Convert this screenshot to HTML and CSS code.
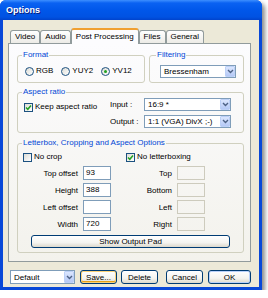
FILE: index.html
```html
<!DOCTYPE html>
<html lang="en">
<head>
  <meta charset="UTF-8" />
  <title>Options</title>
  <link rel="stylesheet" href="styles.css">
</head>
<body>
  <div class="window">
    <div class="titlebar">Options</div>
    <div class="client">
      <div class="tabs">
        <div class="tab">Video</div>
        <div class="tab">Audio</div>
        <div class="tab active">Post Processing</div>
        <div class="tab">Files</div>
        <div class="tab">General</div>
      </div>
      <div class="panel">
        <div class="row-top">
          <fieldset class="group group-format">
            <legend>Format</legend>
            <label class="radio"><span class="dot"></span>RGB</label>
            <label class="radio"><span class="dot"></span>YUY2</label>
            <label class="radio"><span class="dot on"></span>YV12</label>
          </fieldset>
          <fieldset class="group group-filter">
            <legend>Filtering</legend>
            <div class="combo combo-filter">
              <span class="combo-text">Bressenham</span>
              <span class="arrow"><svg width="7" height="5" viewBox="0 0 7 5"><path d="M1 1 L3.5 3.5 L6 1" fill="none" stroke="#4d6185" stroke-width="1.4"/></svg></span>
            </div>
          </fieldset>
        </div>
        <fieldset class="group group-aspect">
          <legend>Aspect ratio</legend>
          <label class="check check-keep"><span class="box"><svg width="7" height="7" viewBox="0 0 7 7"><path d="M1 3.5 L2.8 5.3 L6 1.5" fill="none" stroke="#21a121" stroke-width="1.5"/></svg></span>Keep aspect ratio</label>
          <div class="aspect-fields">
            <span>Input :</span>
            <div class="combo">
              <span class="combo-text">16:9 *</span>
              <span class="arrow"><svg width="7" height="5" viewBox="0 0 7 5"><path d="M1 1 L3.5 3.5 L6 1" fill="none" stroke="#4d6185" stroke-width="1.4"/></svg></span>
            </div>
            <span>Output :</span>
            <div class="combo">
              <span class="combo-text">1:1 (VGA) DivX ;-)</span>
              <span class="arrow"><svg width="7" height="5" viewBox="0 0 7 5"><path d="M1 1 L3.5 3.5 L6 1" fill="none" stroke="#4d6185" stroke-width="1.4"/></svg></span>
            </div>
          </div>
        </fieldset>
        <fieldset class="group group-crop">
          <legend>Letterbox, Cropping and Aspect Options</legend>
          <label class="check"><span class="box"></span>No crop</label>
          <label class="check"><span class="box"><svg width="7" height="7" viewBox="0 0 7 7"><path d="M1 3.5 L2.8 5.3 L6 1.5" fill="none" stroke="#21a121" stroke-width="1.5"/></svg></span>No letterboxing</label>

          <div class="field"><span class="field-label">Top offset</span><span class="textbox">93</span></div>
          <div class="field"><span class="field-label narrow">Top</span><span class="textbox off"></span></div>

          <div class="field"><span class="field-label">Height</span><span class="textbox">388</span></div>
          <div class="field"><span class="field-label narrow">Bottom</span><span class="textbox off"></span></div>

          <div class="field"><span class="field-label">Left offset</span><span class="textbox"></span></div>
          <div class="field"><span class="field-label narrow">Left</span><span class="textbox off"></span></div>

          <div class="field"><span class="field-label">Width</span><span class="textbox">720</span></div>
          <div class="field"><span class="field-label narrow">Right</span><span class="textbox off"></span></div>

          <button class="btn btn-pad">Show Output Pad</button>
        </fieldset>
      </div>
      <div class="footer">
        <div class="combo combo-default">
          <span class="combo-text">Default</span>
          <span class="arrow"><svg width="7" height="5" viewBox="0 0 7 5"><path d="M1 1 L3.5 3.5 L6 1" fill="none" stroke="#4d6185" stroke-width="1.4"/></svg></span>
        </div>
        <button class="btn btn-save">Save...</button>
        <button class="btn btn-delete">Delete</button>
        <button class="btn btn-cancel">Cancel</button>
        <button class="btn btn-ok">OK</button>
      </div>
    </div>
  </div>
</body>
</html>
```

FILE: styles.css
```css
:root {
  --xp-blue: #0848d8;
  --face: #ece9d8;
  --tab-border: #919b9c;
  --group-border: #d0d0bf;
  --label-blue: #0046d5;
  --field-border: #7f9db9;
}
body {
  margin: 0;
  background: #fff;
  font-family: "Liberation Sans", Arial, sans-serif;
  font-size: 8px;
  color: #000;
}
.window {
  width: 262px;
  height: 290px;
  box-sizing: border-box;
  background: var(--xp-blue);
  border-radius: 6px 6px 0 0;
  padding: 0 3px 3px;
  box-shadow: 3px 3px 4px rgba(0,0,0,0.45);
  display: flex;
  flex-direction: column;
}
.titlebar {
  height: 20px;
  margin: 0 -3px;
  padding-left: 6px;
  border-radius: 6px 6px 0 0;
  background: linear-gradient(180deg, #3d8fff 0%, #0a62f2 15%, #0057ea 50%, #0052e2 85%, #0043cc 100%);
  color: #fff;
  font-weight: bold;
  font-size: 9px;
  line-height: 20px;
  text-shadow: 1px 1px #0a1e80;
}
.client {
  flex: 1;
  background: var(--face);
  display: flex;
  flex-direction: column;
  padding: 8px 8px 3px 5px;
}
.tabs {
  display: flex;
  align-items: flex-end;
  height: 16px;
  padding-left: 2px;
  margin-bottom: -1px;
  position: relative;
  z-index: 1;
}
.tab {
  box-sizing: border-box;
  height: 13px;
  line-height: 12px;
  padding: 0 4px;
  margin-bottom: 1px;
  border: 1px solid var(--tab-border);
  border-bottom: 0;
  border-radius: 3px 3px 0 0;
  background: linear-gradient(#fff, #ecebe6);
}
.tab.active {
  height: 16px;
  line-height: 13px;
  margin-bottom: 0;
  border-top: 2px solid #f0a030;
  background: #fcfcfe;
}
.panel {
  height: 219px;
  box-sizing: border-box;
  border: 1px solid var(--tab-border);
  background: linear-gradient(#fcfcfe, #f3f2ec);
  padding: 6px 6px 8px 8px;
  display: flex;
  flex-direction: column;
}
.group {
  margin: 0;
  box-sizing: border-box;
  min-width: 0;
  border: 1px solid var(--group-border);
  border-radius: 3px;
  padding: 0 5px;
}
.group legend {
  padding: 0 1px;
  margin-left: -1px;
  line-height: 10px;
  color: var(--label-blue);
}
.row-top {
  display: flex;
  gap: 4px;
}
.group-format {
  flex: 1;
  height: 33px;
  display: flex;
  align-items: center;
  gap: 8px;
}
.group-filter {
  width: 95px;
  height: 33px;
  display: flex;
  align-items: center;
  padding: 0 7px 0 10px;
}
.group-filter legend {
  margin-left: -4px;
}
.radio, .check {
  display: flex;
  align-items: center;
  gap: 2px;
  line-height: 10px;
}
.radio:first-of-type {
  margin-left: 2px;
}
.dot {
  box-sizing: border-box;
  width: 9px;
  height: 9px;
  border: 1px solid #1c5180;
  border-radius: 50%;
  background: linear-gradient(135deg, #dcdcd5, #fff);
  display: flex;
  align-items: center;
  justify-content: center;
}
.dot.on::after {
  content: "";
  width: 3px;
  height: 3px;
  border-radius: 50%;
  background: #21a121;
}
.box {
  box-sizing: border-box;
  width: 9px;
  height: 9px;
  border: 1px solid #1c5180;
  background: linear-gradient(135deg, #dcdcd5, #fff);
  display: flex;
  align-items: center;
  justify-content: center;
}
.combo {
  box-sizing: border-box;
  height: 13px;
  border: 1px solid var(--field-border);
  background: #fff;
  display: flex;
  align-items: center;
  padding: 0 0 0 3px;
}
.combo-text {
  flex: 1;
  white-space: nowrap;
  overflow: hidden;
}
.arrow {
  box-sizing: border-box;
  width: 10px;
  height: 11px;
  border: 1px solid #bcd0f7;
  border-radius: 1px;
  background: linear-gradient(#dbe6fe, #b5c9f6);
  display: flex;
  align-items: center;
  justify-content: center;
}
.combo-filter {
  flex: 1;
}
.group-aspect {
  height: 46px;
  margin-top: 4px;
  padding-top: 1px;
  display: flex;
  align-items: flex-start;
}
.check-keep {
  margin-top: 4px;
  margin-left: 1px;
}
.aspect-fields {
  margin-left: auto;
  margin-right: 7px;
  display: grid;
  grid-template-columns: 34px 87px;
  row-gap: 4px;
  align-items: center;
}
.group-crop {
  height: 115px;
  margin-top: 5px;
  padding-top: 3px;
  display: grid;
  grid-template-columns: 103px 1fr;
  grid-auto-rows: 14px;
  grid-template-rows: 12px;
  row-gap: 3px;
  align-content: start;
}
.field {
  display: flex;
  align-items: center;
  gap: 5px;
}
.field-label {
  width: 55px;
  text-align: right;
}
.field-label.narrow {
  width: 46px;
}
.textbox {
  box-sizing: border-box;
  width: 28px;
  height: 14px;
  border: 1px solid var(--field-border);
  background: #fff;
  padding-left: 2px;
  line-height: 11px;
}
.textbox.off {
  background: transparent;
  border-color: #cdcbbd;
}
.btn {
  box-sizing: border-box;
  height: 14px;
  padding: 0;
  border: 1px solid #003c74;
  border-radius: 3px;
  background: linear-gradient(#fff, #f4f4f0 60%, #dcd8cc);
  font: inherit;
  color: #000;
  line-height: 11px;
}
.btn-pad {
  grid-column: 1 / -1;
  justify-self: center;
  width: 199px;
  height: 13px;
  margin-top: 1px;
}
.footer {
  display: flex;
  height: 14px;
  margin-top: 8px;
  padding-left: 2px;
}
.combo-default {
  width: 65px;
  height: 14px;
}
.combo-default .arrow {
  height: 12px;
}
.btn-save {
  width: 37px;
  margin-left: 5px;
  box-shadow: inset 0 0 0 1px #fbd27a, inset 0 -1px 0 1px #e5a01a;
}
.btn-delete {
  width: 37px;
  margin-left: 4px;
}
.btn-cancel {
  width: 37px;
  margin-left: 8px;
}
.btn-ok {
  width: 43px;
  margin-left: 5px;
  box-shadow: inset 0 0 0 1px #b9d1fa;
}
```
